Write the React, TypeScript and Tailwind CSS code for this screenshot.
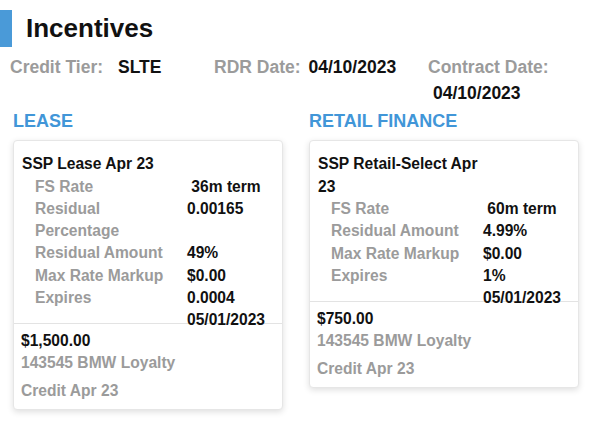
import React from 'react';

interface Row {
    label: string;
    value: React.ReactNode;
}

interface Program {
    title: string;
    rows: Row[];
    amount: string;
    code: string;
    credit: string;
}

const LEASE: Program = {
    title: 'SSP Lease Apr 23',
    rows: [
        { label: 'FS Rate', value: '\u00a036m term' },
        { label: 'Residual Percentage', value: '0.00165' },
        { label: 'Residual Amount', value: '49%' },
        { label: 'Max Rate Markup', value: '$0.00' },
        { label: 'Expires', value: '0.0004 05/01/2023' },
    ],
    amount: '$1,500.00',
    code: '143545 BMW Loyalty',
    credit: 'Credit Apr 23',
};

const RETAIL: Program = {
    title: 'SSP Retail-Select Apr 23',
    rows: [
        { label: 'FS Rate', value: '\u00a060m term' },
        { label: 'Residual Amount', value: '4.99%' },
        { label: 'Max Rate Markup', value: '$0.00' },
        { label: 'Expires', value: '1% 05/01/2023' },
    ],
    amount: '$750.00',
    code: '143545 BMW Loyalty',
    credit: 'Credit Apr 23',
};

const ProgramCard: React.FC<{ program: Program }> = ({ program }) => (
    <div className="w-[270px] bg-white border border-[#e6e6e6] rounded-[4px] shadow-[0_2px_6px_rgba(0,0,0,0.13)] text-[15.6px] font-bold">
        <div className="pt-[12px] pl-[8px]">
            <div className="max-w-[175px] leading-[22.5px] text-[#111]">{program.title}</div>
            <div className="pl-[13px]">
                {program.rows.map(row => (
                    <div key={row.label} className="flex leading-[22.33px]">
                        <div className="w-[152px] shrink-0 text-[#9b9b9b]">{row.label}</div>
                        <div className="w-[100px] text-[#111]">{row.value}</div>
                    </div>
                ))}
            </div>
        </div>
        <div className="-mt-[9px] border-t border-[#e3e3e3] pt-[6px] pb-[7px] pl-[7px]">
            <div className="leading-[22px] text-[#111]">{program.amount}</div>
            <div className="leading-[22px] text-[#9b9b9b]">{program.code}</div>
            <div className="mt-[6px] leading-[22px] text-[#9b9b9b]">{program.credit}</div>
        </div>
    </div>
);

export default function App() {
    return (
        <div className="w-[590px] h-[422px] bg-white overflow-hidden" style={{ fontFamily: '"Liberation Sans", Arial, sans-serif' }}>
            <div className="flex items-center pt-[10px]">
                <div className="w-[12px] h-[37px] bg-[#4a9ad8]" />
                <h1 className="ml-[14px] text-[26px] font-bold leading-[37px] text-[#111]">Incentives</h1>
            </div>

            <div className="flex mt-[7px] pl-[10px] text-[17.5px] font-bold leading-[26px]">
                <div className="w-[204px] shrink-0">
                    <span className="text-[#9b9b9b]">Credit Tier:</span>
                    <span className="ml-[15px] text-[#111]">SLTE</span>
                </div>
                <div className="w-[214px] shrink-0">
                    <span className="text-[#9b9b9b]">RDR Date:</span>
                    <span className="ml-[8px] text-[#111]">04/10/2023</span>
                </div>
                <div className="w-[140px]">
                    <span className="text-[#9b9b9b]">Contract Date:</span>{' '}
                    <span className="inline-block ml-[5px] text-[#111]">04/10/2023</span>
                </div>
            </div>

            <div className="flex gap-[26px] mt-[3px] pl-[13px]">
                <div>
                    <h2 className="text-[18px] font-bold leading-[24px] text-[#4196d8]">LEASE</h2>
                    <div className="mt-[7px]">
                        <ProgramCard program={LEASE} />
                    </div>
                </div>
                <div>
                    <h2 className="text-[18px] font-bold leading-[24px] text-[#4196d8]">RETAIL FINANCE</h2>
                    <div className="mt-[7px]">
                        <ProgramCard program={RETAIL} />
                    </div>
                </div>
            </div>
        </div>
    );
}
